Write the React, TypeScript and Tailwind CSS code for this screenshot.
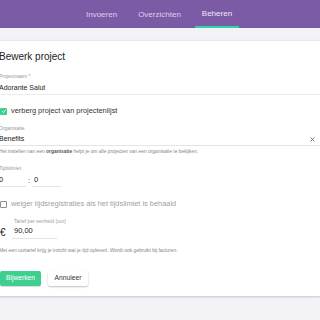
import React from 'react';

const font = { fontFamily: '"Liberation Sans", Arial, sans-serif' };

function Label({ children, className = '' }: { children: React.ReactNode; className?: string }) {
  return <div className={`text-[5px] leading-[6px] text-[#9a9a9a] ${className}`}>{children}</div>;
}

export default function App() {
  return (
    <div className="w-[320px] h-[320px] overflow-hidden bg-[#f2f2f7] text-[#333]" style={font}>
      {/* Top nav */}
      <nav className="h-[28px] bg-[#7b5aa6] flex pl-[86px] text-[8px] text-[#dcd0ea]">
        <a className="h-full flex items-center pt-[2px] mr-[21px]">Invoeren</a>
        <a className="h-full flex items-center pt-[2px] mr-[14px]">Overzichten</a>
        <a className="h-full flex flex-col">
          <span className="flex-1 flex items-center pt-[2px] px-[7px] text-[#efe9f7]">Beheren</span>
          <span className="h-[2px] bg-[#2fd4a0]" />
        </a>
      </nav>
      <div className="h-[12px]" />

      {/* Card */}
      <div className="bg-white border-t border-[#e6e6ec] shadow-[0_1px_2px_rgba(0,0,0,0.18)] h-[256px] pt-[10px] -ml-[1px]">
        <h1 className="text-[10px] leading-[12px] text-[#222]">Bewerk project</h1>

        <Label className="mt-[10px]">Projectnaam *</Label>
        <div className="mt-[4px] text-[7px] leading-[10px] text-[#222] border-b border-[#ececec] pb-[1px]">Adorante Salut</div>

        <div className="mt-[11px] h-[10px] flex items-center gap-[4px] pl-[1px]">
          <div className="w-[7px] h-[7px] bg-[#3ecf8e] flex items-center justify-center rounded-[1px]">
            <svg viewBox="0 0 10 10" className="w-[6px] h-[6px]"><path d="M1.8 5.3 L4.1 7.4 L8.3 2.6" fill="none" stroke="white" strokeWidth="1.4" /></svg>
          </div>
          <span className="text-[7.4px] leading-[10px] text-[#333]">verberg project van projectenlijst</span>
        </div>

        <Label className="mt-[9px]">Organisatie</Label>
        <div className="mt-[3px] flex items-center justify-between text-[7px] leading-[10px] text-[#222] border-b border-[#e4e4e4] pb-[1px]">
          <span>Benefits</span>
          <svg viewBox="0 0 10 10" className="w-[5px] h-[5px] mr-[5px]"><path d="M1 1 L9 9 M9 1 L1 9" stroke="#555" strokeWidth="1.6" /></svg>
        </div>
        <div className="mt-[2px] text-[4.9px] leading-[7px] text-[#858585] whitespace-nowrap">
          Het instellen van een <b className="text-[#555]">organisatie</b> helpt je om alle projecten van een organisatie te bekijken.
        </div>

        <Label className="mt-[10px]">Tijdslimiet</Label>
        <div className="mt-[4px] flex items-end text-[7.5px] leading-[10px] text-[#222]">
          <div className="w-[27px] border-b border-[#e4e4e4] pb-[1px]">0</div>
          <div className="w-[6px] text-center pb-[1px]">:</div>
          <div className="w-[29px] border-b border-[#e4e4e4] pb-[1px] pl-[2px]">0</div>
        </div>

        <div className="mt-[12px] h-[10px] flex items-center gap-[4px] pl-[1px]">
          <div className="w-[7px] h-[7px] border border-[#8f8f8f] rounded-[1px] bg-white" />
          <span className="text-[7.4px] leading-[10px] text-[#a0a0a0]">weiger tijdsregistraties als het tijdslimiet is behaald</span>
        </div>

        <Label className="mt-[9px] pl-[15px]">Tarief per eenheid (uur)</Label>
        <div className="mt-[2px] flex items-end">
          <span className="w-[13px] text-[10px] leading-[10px] text-[#222] pl-[1px] pb-[1px]">€</span>
          <div className="w-[45px] border-b border-[#e4e4e4] pb-[2px] pl-[2px] text-[7.5px] leading-[10px] text-[#222]">90,00</div>
        </div>
        <div className="mt-[8px] text-[4.9px] leading-[7px] text-[#858585] whitespace-nowrap">
          Met een uurtarief krijg je inzicht wat je tijd oplevert. Wordt ook gebruikt bij facturen.
        </div>

        <div className="mt-[17px] flex gap-[7px] pl-[1px]">
          <button className="h-[15px] w-[41px] rounded-[2px] bg-[#3ecf8e] text-white text-[6.7px] shadow-[0_1px_1px_rgba(0,0,0,0.15)]">Bijwerken</button>
          <button className="h-[15px] w-[40px] rounded-[2px] bg-white text-[#333] text-[6.7px] shadow-[0_1px_2px_rgba(0,0,0,0.25)]">Annuleer</button>
        </div>
      </div>
    </div>
  );
}
